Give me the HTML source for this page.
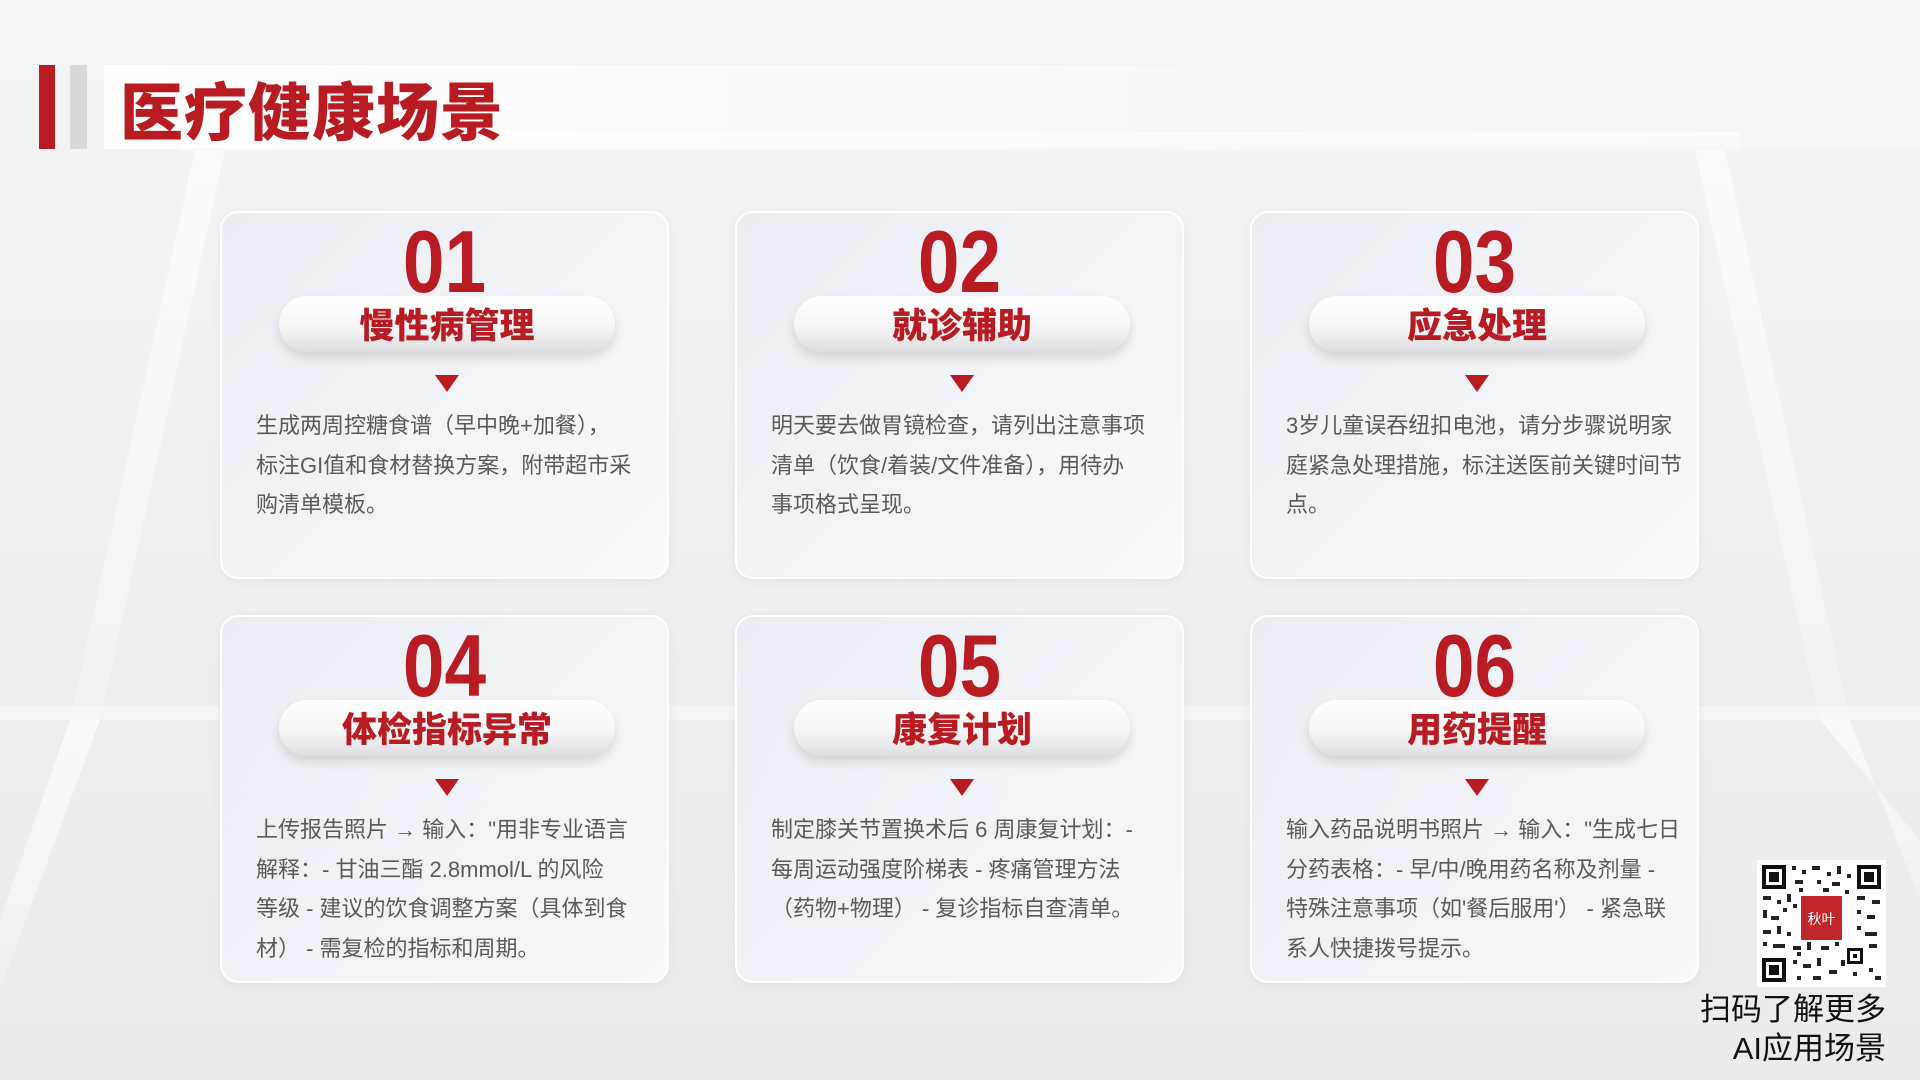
<!DOCTYPE html>
<html><head><meta charset="utf-8"><style>
*{margin:0;padding:0;box-sizing:border-box}
body{width:1920px;height:1080px;overflow:hidden;position:relative;background:#eceef1;font-family:"Liberation Sans","Noto Sans CJK SC",sans-serif}
.bg{position:absolute;left:0;top:0}
.bar1{position:absolute;left:39px;top:65px;width:16px;height:84px;background:#b81c22}
.bar2{position:absolute;left:70px;top:65px;width:17px;height:84px;background:#d9d9d9}
.band{position:absolute;left:104px;top:65px;width:1816px;height:84px;background:linear-gradient(90deg,rgba(255,255,255,.9),rgba(255,255,255,.45) 60%,rgba(255,255,255,.25))}
.title{position:absolute;left:120px;top:66px;font-size:63px;font-weight:900;color:#b81c22;font-family:"Noto Sans CJK SC",sans-serif;letter-spacing:1px;line-height:86px}
.card{position:absolute;width:449px;height:368px;border-radius:18px;background:linear-gradient(135deg,rgba(234,236,242,.95),rgba(243,244,248,.95) 60%,rgba(250,250,252,.95));border:2px solid rgba(255,255,255,.9);box-shadow:0 2px 10px rgba(0,0,0,.05)}
.num{position:absolute;left:0;width:100%;top:4px;text-align:center;font-size:88px;font-weight:bold;color:#b81c22;line-height:90px;font-family:"Liberation Sans Narrow","Liberation Sans",sans-serif;transform:scaleX(.85)}
.pill{position:absolute;left:57px;top:83px;width:336px;height:56px;border-radius:28px;background:linear-gradient(180deg,#fff 0%,#f6f6f7 55%,#dedee2 100%);box-shadow:0 6px 10px rgba(0,0,0,.12);text-align:center;font-size:35px;font-weight:900;color:#b81c22;line-height:56px;font-family:"Noto Sans CJK SC",sans-serif}
.tri{position:absolute;left:213px;top:162px;width:0;height:0;border-left:12px solid transparent;border-right:12px solid transparent;border-top:17px solid #b81c22}
.txt{position:absolute;left:34px;top:193px;font-size:22px;color:#5a5a5a;line-height:39.5px;white-space:nowrap}
.qr{position:absolute;left:1757px;top:860px;width:129px;height:127px;background:#fff}
.qrt{position:absolute;right:34px;top:990px;font-size:31px;color:#111;line-height:39px;text-align:right}
</style></head><body>
<svg class="bg" width="1920" height="1080">
<defs><linearGradient id="g" x1="0" y1="0" x2="0" y2="1"><stop offset="0" stop-color="#f3f4f6"/><stop offset="1" stop-color="#e9ebee"/></linearGradient>
<linearGradient id="h" x1="0" y1="0" x2="0" y2="1"><stop offset="0" stop-color="#fff" stop-opacity=".7"/><stop offset="1" stop-color="#fff" stop-opacity=".2"/></linearGradient></defs>
<rect width="1920" height="1080" fill="url(#g)"/>
<g fill="url(#h)">
<polygon points="195,150 225,150 100,720 70,720"/>
<polygon points="1695,150 1725,150 1850,720 1820,720"/>
<rect x="180" y="132" width="1560" height="20"/>
<polygon points="70,720 100,720 0,990 0,920"/>
<polygon points="1820,720 1850,720 1920,900 1920,840"/>
</g>
<rect x="0" y="706" width="1920" height="14" fill="#fff" opacity=".35"/>
</svg>
<div class="bar1"></div><div class="bar2"></div><div class="band"></div>
<div class="title">医疗健康场景</div>

<div class="card" style="left:220px;top:211px"><div class="num">01</div><div class="pill">慢性病管理</div><div class="tri"></div>
<div class="txt">生成两周控糖食谱（早中晚+加餐），<br>标注GI值和食材替换方案，附带超市采<br>购清单模板。</div></div>
<div class="card" style="left:735px;top:211px"><div class="num">02</div><div class="pill">就诊辅助</div><div class="tri"></div>
<div class="txt">明天要去做胃镜检查，请列出注意事项<br>清单（饮食/着装/文件准备），用待办<br>事项格式呈现。</div></div>
<div class="card" style="left:1250px;top:211px"><div class="num">03</div><div class="pill">应急处理</div><div class="tri"></div>
<div class="txt">3岁儿童误吞纽扣电池，请分步骤说明家<br>庭紧急处理措施，标注送医前关键时间节<br>点。</div></div>
<div class="card" style="left:220px;top:615px"><div class="num">04</div><div class="pill">体检指标异常</div><div class="tri"></div>
<div class="txt">上传报告照片 → 输入："用非专业语言<br>解释：- 甘油三酯 2.8mmol/L 的风险<br>等级 - 建议的饮食调整方案（具体到食<br>材） - 需复检的指标和周期。</div></div>
<div class="card" style="left:735px;top:615px"><div class="num">05</div><div class="pill">康复计划</div><div class="tri"></div>
<div class="txt">制定膝关节置换术后 6 周康复计划：-<br>每周运动强度阶梯表 - 疼痛管理方法<br>（药物+物理） - 复诊指标自查清单。</div></div>
<div class="card" style="left:1250px;top:615px"><div class="num">06</div><div class="pill">用药提醒</div><div class="tri"></div>
<div class="txt">输入药品说明书照片 → 输入："生成七日<br>分药表格：- 早/中/晚用药名称及剂量 -<br>特殊注意事项（如'餐后服用'） - 紧急联<br>系人快捷拨号提示。</div></div>

<div class="qr"><svg width="129" height="127" viewBox="0 0 129 127">
<g fill="#111">
<rect x="5" y="5" width="24" height="24"/><rect x="9" y="9" width="16" height="16" fill="#fff"/><rect x="12" y="12" width="10" height="10"/>
<rect x="100" y="5" width="24" height="24"/><rect x="104" y="9" width="16" height="16" fill="#fff"/><rect x="107" y="12" width="10" height="10"/>
<rect x="5" y="98" width="24" height="24"/><rect x="9" y="102" width="16" height="16" fill="#fff"/><rect x="12" y="105" width="10" height="10"/>
<rect x="90" y="88" width="16" height="16"/><rect x="93" y="91" width="10" height="10" fill="#fff"/><rect x="96" y="94" width="4" height="4"/>
</g>
<g fill="#222">
<path d="M35 6h4v4h-4zM45 10h4v4h-4zM55 6h8v4h-8zM70 12h4v4h-4zM80 6h4v8h-4zM90 14h4v4h-4zM38 20h8v4h-8zM60 20h4v4h-4zM75 22h8v4h-8zM6 36h8v4h-8zM20 40h4v4h-4zM30 34h4v8h-4zM100 36h8v4h-8zM115 40h8v4h-8zM6 50h4v8h-4zM14 56h8v4h-8zM26 48h4v4h-4zM36 44h4v4h-4zM100 50h4v4h-4zM110 55h8v4h-8zM6 70h8v4h-8zM20 66h4v8h-4zM30 72h4v4h-4zM100 66h4v4h-4zM108 72h12v4h-12zM6 82h4v4h-4zM16 84h12v4h-12zM36 86h8v4h-8zM50 82h4v8h-4zM64 86h8v4h-8zM78 82h4v4h-4zM112 84h8v4h-8zM36 100h4v4h-4zM46 104h8v4h-8zM60 98h4v8h-4zM72 110h8v4h-8zM40 116h4v4h-4zM112 108h4v4h-4zM118 116h6v4h-6zM56 116h8v4h-8zM42 28h4v4h-4zM66 28h6v4h-6zM88 30h4v4h-4zM40 92h4v4h-4zM84 100h4v6h-4zM96 112h4v4h-4z"/>
</g>
<rect x="44" y="36" width="41" height="44" fill="#c0262b"/>
<text x="64.5" y="64" font-size="14" fill="#fff" text-anchor="middle" font-family="Noto Sans CJK SC,sans-serif">秋叶</text>
</svg></div>
<div class="qrt">扫码了解更多<br>AI应用场景</div>
</body></html>
